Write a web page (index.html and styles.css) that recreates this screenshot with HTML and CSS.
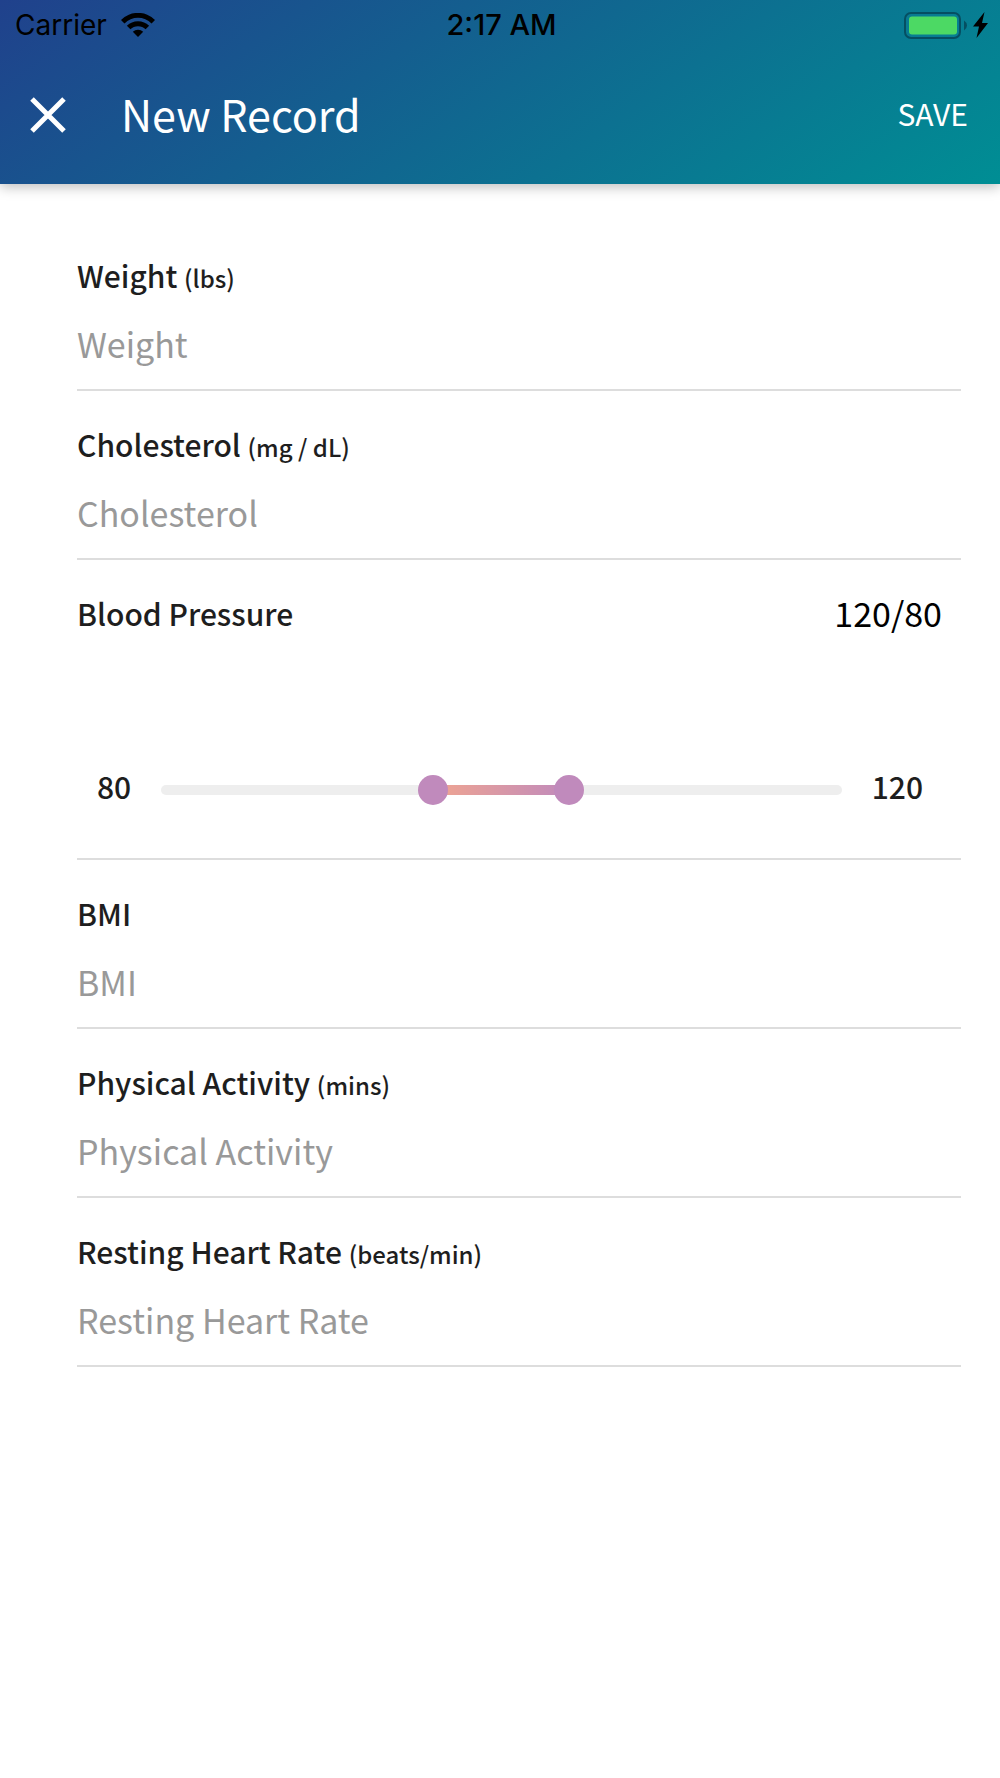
FILE: index.html
```html
<!DOCTYPE html>
<html lang="en">
<head>
  <meta charset="utf-8">
  <meta name="viewport" content="width=device-width, initial-scale=1">
  <title>New Record</title>
  <link rel="stylesheet" href="styles.css">
</head>
<body>
  <form class="screen">
    <header class="header">
      <div class="status">
        <div class="status-left">
          <span>Carrier</span>
          <svg class="wifi" viewBox="0 0 34 24" aria-hidden="true">
            <path d="M17 24 L11.8 18.7 A7.6 7.6 0 0 1 22.2 18.7 Z"/>
            <path d="M5.900 12.800 A15.700 15.700 0 0 1 28.100 12.800 L24.600 16.300 A10.750 10.750 0 0 0 9.400 16.300 Z"/>
            <path d="M0 6.900 A24 24 0 0 1 34 6.900 L30.500 10.400 A19.100 19.100 0 0 0 3.500 10.400 Z"/>
          </svg>
        </div>
        <span class="time">2:17 AM</span>
        <div class="status-right">
          <svg class="battery" viewBox="0 0 64 27" aria-hidden="true">
            <rect x="1" y="1" width="55" height="25" rx="6" fill="none" stroke="#054f62" stroke-width="2"/>
            <rect x="5" y="4" width="48" height="18" rx="3" fill="#4cd964" transform="translate(0 .5)"/>
            <path d="M60 8.500 Q63 10.500 63 13.500 Q63 16.500 60 18.500 Z" fill="#054f62"/>
          </svg>
          <svg class="bolt" viewBox="0 0 15 26" aria-hidden="true">
            <path d="M11.500 0 L0 14.500 H6 L3.500 26 L15 11 H9 Z"/>
          </svg>
        </div>
      </div>
      <div class="toolbar">
        <button class="close" type="button" aria-label="Close">
          <svg viewBox="0 0 36 36" aria-hidden="true"><path d="M2 2 L34 34 M34 2 L2 34"/></svg>
        </button>
        <h1 class="title">New Record</h1>
        <button class="save" type="submit">SAVE</button>
      </div>
    </header>

    <main class="fields">
      <div class="field">
        <label class="label" for="weight">Weight <small>(lbs)</small></label>
        <input class="entry" id="weight" type="text" inputmode="decimal" placeholder="Weight">
      </div>
      <div class="field">
        <label class="label" for="cholesterol">Cholesterol <small>(mg / dL)</small></label>
        <input class="entry" id="cholesterol" type="text" inputmode="decimal" placeholder="Cholesterol">
      </div>
      <div class="field" role="group" aria-labelledby="pressure">
        <div class="pressure-head">
          <span class="label" id="pressure">Blood Pressure</span>
          <output class="reading" for="low high">120/80</output>
        </div>
        <div class="pressure-range">
          <label class="bound" for="low">80</label>
          <div class="track">
            <input class="slider" id="low" type="range" min="0" max="200" value="80">
            <input class="slider" id="high" type="range" min="0" max="200" value="120">
          </div>
          <label class="bound" for="high">120</label>
        </div>
      </div>
      <div class="field">
        <label class="label" for="bmi">BMI</label>
        <input class="entry" id="bmi" type="text" inputmode="decimal" placeholder="BMI">
      </div>
      <div class="field">
        <label class="label" for="activity">Physical Activity <small>(mins)</small></label>
        <input class="entry" id="activity" type="text" inputmode="numeric" placeholder="Physical Activity">
      </div>
      <div class="field">
        <label class="label" for="heart">Resting Heart Rate <small>(beats/min)</small></label>
        <input class="entry" id="heart" type="text" inputmode="numeric" placeholder="Resting Heart Rate">
      </div>
    </main>
  </form>
</body>
</html>
```
FILE: styles.css
```css
* {
  box-sizing: border-box;
}

body {
  margin: 0;
  background: #fff;
  color: #1e1e1e;
  font-family: "Noto Sans CJK SC", "Noto Sans", sans-serif;
  font-size: 30px;
  line-height: 40px;
}

button,
input {
  margin: 0;
  padding: 0;
  border: 0;
  background: none;
  color: inherit;
  font: inherit;
}

.screen {
  min-height: 100vh;
}

.header {
  padding-bottom: 8px;
  background: linear-gradient(145deg, #20418c, #008e94);
  box-shadow: 0 3px 12px rgba(0, 0, 0, 0.26);
}

.status {
  display: grid;
  grid-template-columns: 1fr auto 1fr;
  align-items: center;
  height: 50px;
  padding: 0 12px 0 15px;
  color: #000;
  font-family: Inter, sans-serif;
  font-size: 28px;
}

.status-left,
.status-right {
  display: flex;
  align-items: center;
  gap: 14px;
}

.status-right {
  justify-content: flex-end;
  gap: 5px;
}

.time {
  font-size: 29px;
  font-weight: 500;
}

.wifi {
  width: 34px;
  height: 24px;
}

.battery {
  width: 64px;
  height: 27px;
}

.bolt {
  width: 15px;
  height: 26px;
}

.toolbar {
  display: flex;
  align-items: center;
  height: 126px;
  padding: 0 32px 0 30px;
  color: #fff;
}

.close {
  display: flex;
  width: 36px;
  height: 40px;
  align-items: flex-end;
}

.close svg {
  width: 36px;
  height: 36px;
  fill: none;
  stroke: currentColor;
  stroke-width: 5px;
}

.title {
  flex: 1;
  margin: 0 0 0 55px;
  font-size: 43px;
  font-weight: 400;
  line-height: 60px;
}

.fields {
  padding: 38px 39px 38px 77px;
}

.field {
  padding: 33px 0 21px;
  border-bottom: 2px solid #ddd;
}

.label {
  display: block;
  font-weight: 500;
}

.label small {
  font-size: 24px;
  line-height: 24px;
}

.entry {
  display: block;
  width: 100%;
  height: 50px;
  margin-top: 23px;
  outline: 0;
  font-size: 34px;
}

.entry::placeholder {
  color: #999;
  opacity: 1;
}

.pressure-head,
.pressure-range {
  display: flex;
  align-items: center;
  justify-content: space-between;
}

.reading {
  padding-right: 19px;
  color: #000;
  font-size: 34px;
}

.pressure-range {
  gap: 30px;
  margin: 133px 0 23px;
  padding: 0 38px 0 20px;
}

.bound {
  padding-bottom: 8px;
  font-weight: 500;
}

.track {
  display: grid;
  flex: 1;
  align-content: center;
  height: 10px;
  border-radius: 5px;
  background:
    linear-gradient(to right, #f0a591, #c08abc) 50% / 20% 100% no-repeat,
    #eee;
}

.slider {
  grid-area: 1 / 1;
  height: 30px;
  margin: 0 -15px;
  appearance: none;
  pointer-events: none;
}

.slider::-webkit-slider-thumb {
  width: 30px;
  height: 30px;
  border-radius: 50%;
  background: #c08abc;
  appearance: none;
  pointer-events: auto;
}
```
